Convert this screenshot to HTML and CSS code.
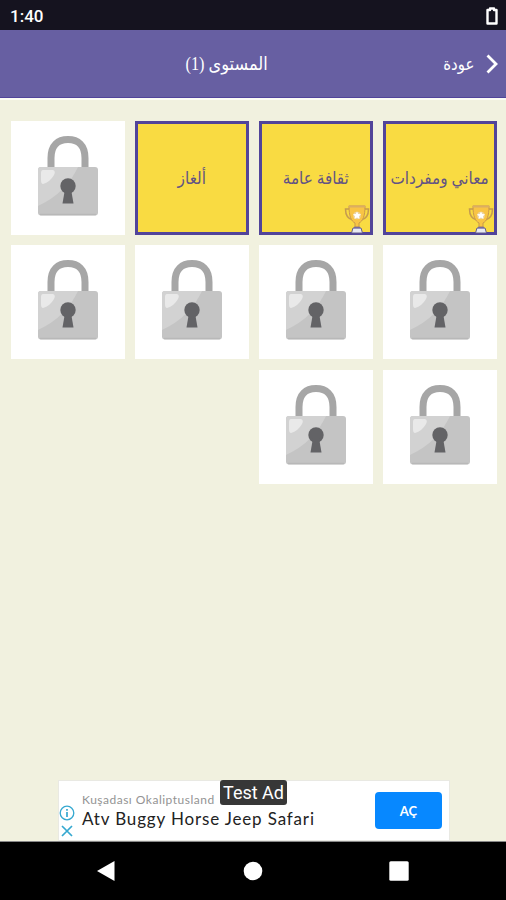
FILE: index.html
```html
<!DOCTYPE html>
<html lang="ar">
<head>
    <meta charset="UTF-8">
    <meta name="viewport" content="width=device-width, initial-scale=1.0">
    <title>المستوى (1)</title>
    <link rel="stylesheet" href="styles.css">
</head>
<body>
    <!-- Shared icons -->
    <svg class="symbols" width="0" height="0">
        <symbol id="lock" viewBox="0 0 60 80">
            <path d="M13 34V22C13 9 20 3.500 30 3.500S47 9 47 22V34" fill="none" stroke="#a6a6a6" stroke-width="7"/>
            <rect x="0" y="31" width="60" height="48.500" rx="3" fill="#c4c4c4"/>
            <path d="M3 31H40C33 46 20 61 0 70V34Q0 31 3 31Z" fill="#d2d2d2"/>
            <path d="M5 34H15Q18 35 16 39Q12 46 5 48Q3 48 3 44V37Q3 34 5 34Z" fill="#e9e9e9"/>
            <path d="M2 78.500H58" stroke="#b8b8b8" stroke-width="1.500"/>
            <circle cx="30" cy="50" r="7.700" fill="#636366"/>
            <path d="M27 53H33L35.500 67.500H24.500Z" fill="#636366"/>
        </symbol>
        <symbol id="trophy" viewBox="0 0 26 30">
            <path d="M6 5H1.500C1.500 12 4 15 9 16M20 5H24.500C24.500 12 22 15 17 16" fill="none" stroke="#c49a50" stroke-width="1.500"/>
            <path d="M5 2H21C21 12 19 17 15 19V23H11V19C7 17 5 12 5 2Z" fill="#f8c445" stroke="#c9994a" stroke-width="1"/>
            <path d="M4.500 2.500H21.500" stroke="#dcae62" stroke-width="2"/>
            <circle cx="13" cy="11.500" r="3.800" fill="#ecd3a0"/>
            <path d="M13 7.500L14.200 10L17 10.300L15 12.200L15.500 15L13 13.600L10.500 15L11 12.200L9 10.300L11.800 10Z" fill="#fff"/>
            <path d="M9 24H17L18.500 29H7.500Z" fill="#e8eaf2" stroke="#61598b" stroke-width="1"/>
            <path d="M10 23.500H16" stroke="#776b9d" stroke-width="1.500"/>
        </symbol>
    </svg>

    <div class="phone">
        <div class="status-bar">
            <span>1:40</span>
            <svg class="battery" viewBox="0 0 12 18">
                <path d="M4 1.500H8V3H10.500V16.500H1.500V3H4Z" fill="none" stroke="#fff" stroke-width="2.400" stroke-linejoin="round"/>
            </svg>
        </div>

        <header class="header">
            <h1 dir="rtl">المستوى (1)</h1>
            <div class="back">
                <span>عودة</span>
                <svg viewBox="0 0 12 20">
                    <path d="M1.500 1.500L10 10L1.500 18.500" fill="none" stroke="#fff" stroke-width="2.800"/>
                </svg>
            </div>
        </header>

        <main class="levels" dir="rtl">
            <div class="tile open">
                <span>معاني ومفردات</span>
                <svg class="trophy"><use href="#trophy"/></svg>
            </div>
            <div class="tile open">
                <span>ثقافة عامة</span>
                <svg class="trophy"><use href="#trophy"/></svg>
            </div>
            <div class="tile open"><span>ألغاز</span></div>
            <div class="tile"><svg class="lock"><use href="#lock"/></svg></div>
            <div class="tile"><svg class="lock"><use href="#lock"/></svg></div>
            <div class="tile"><svg class="lock"><use href="#lock"/></svg></div>
            <div class="tile"><svg class="lock"><use href="#lock"/></svg></div>
            <div class="tile"><svg class="lock"><use href="#lock"/></svg></div>
            <div class="tile"><svg class="lock"><use href="#lock"/></svg></div>
            <div class="tile"><svg class="lock"><use href="#lock"/></svg></div>
        </main>

        <div class="ad" lang="tr">
            <div class="ad-icons">
                <svg viewBox="0 0 16 16">
                    <circle cx="8" cy="8" r="6.800" fill="none" stroke="#35a8d0" stroke-width="1.300"/>
                    <path d="M8 7V12M8 4V5.700" stroke="#35a8d0" stroke-width="1.700"/>
                </svg>
                <svg viewBox="0 0 16 16">
                    <path d="M3 3L13 13M13 3L3 13" stroke="#35a8d0" stroke-width="1.700"/>
                </svg>
            </div>
            <div class="ad-text">
                <p class="ad-brand">Kuşadası Okaliptusland</p>
                <p class="ad-title">Atv Buggy Horse Jeep Safari</p>
            </div>
            <button class="ad-button">AÇ</button>
            <span class="ad-badge">Test Ad</span>
        </div>

        <nav class="nav-bar">
            <svg viewBox="0 0 20 22"><path d="M1 11L18.500 1V21Z" fill="#fff"/></svg>
            <svg viewBox="0 0 20 22"><circle cx="10" cy="11" r="9.300" fill="#fff"/></svg>
            <svg viewBox="0 0 20 22"><rect x=".3" y="1.300" width="19.400" height="19.400" rx="1.500" fill="#fff"/></svg>
        </nav>
    </div>
</body>
</html>
```

FILE: styles.css
```css
:root {
    --purple: #675fa2;
    --purple-dark: #51449a;
    --background: #f1f1df;
    --yellow: #f9db42;
    --ad-blue: #0788ff;
}

* {
    margin: 0;
    padding: 0;
    box-sizing: border-box;
}

body {
    background: var(--background);
}

svg {
    display: block;
}

.symbols {
    position: absolute;
}

.phone {
    display: flex;
    flex-direction: column;
    width: 506px;
    height: 900px;
    overflow: hidden;
    font-family: "Liberation Serif", "DejaVu Sans", serif;
}

.status-bar {
    display: flex;
    justify-content: space-between;
    align-items: center;
    height: 30px;
    padding: 2px 8px 0 10px;
    background: #15131f;
    color: #fff;
    font: 500 17px Roboto, sans-serif;
}

.battery {
    width: 12px;
    height: 18px;
}

.header {
    display: grid;
    grid-template-columns: 1fr auto 1fr;
    align-items: center;
    height: 70px;
    padding: 0 8px 0 0;
    background: var(--purple);
    border-bottom: 2px solid #fcfcf5;
    box-shadow: inset 0 -1px var(--purple-dark);
    color: #fff;
}

.header h1 {
    grid-column: 2;
    margin: 0 22px 0 -22px;
    font-size: 18px;
    font-weight: normal;
    white-space: nowrap;
    transform: scaleX(0.9);
}

.back {
    display: flex;
    justify-content: flex-end;
    align-items: center;
    gap: 12px;
    font-size: 17px;
}

.back span {
    transform: scaleX(0.88);
    transform-origin: right;
}

.back svg {
    width: 12px;
    height: 20px;
}

.levels {
    flex: 1;
    display: grid;
    grid-template-columns: repeat(4, 114px);
    grid-auto-rows: 114px;
    gap: 10.300px 10px;
    align-content: start;
    padding: 21px 9px 0 10px;
}

.tile {
    position: relative;
    display: flex;
    justify-content: center;
    align-items: center;
    background: #fff;
}

.tile.open {
    background: var(--yellow);
    border: 3px solid var(--purple-dark);
    color: #625384;
    font-size: 17px;
    white-space: nowrap;
}

.tile span {
    transform: scaleX(0.9);
}

.lock {
    width: 60px;
    height: 80px;
    margin-top: -4px;
}

.trophy {
    position: absolute;
    right: 0;
    bottom: -2px;
    width: 26px;
    height: 30px;
}

.ad {
    position: relative;
    display: flex;
    align-items: center;
    width: 392px;
    height: 61px;
    margin-left: 58px;
    padding: 0 7px 0 0;
    background: #fff;
    border: 1px solid #e9e9e3;
}

.ad-icons {
    display: grid;
    gap: 2px;
    margin-top: 23px;
}

.ad-icons svg {
    width: 16px;
    height: 16px;
}

.ad-text {
    flex: 1;
    margin-left: 7px;
    padding-top: 1px;
    font-family: Lato, sans-serif;
    white-space: nowrap;
}

.ad-brand {
    color: #939393;
    font-size: 12px;
    line-height: 16px;
    letter-spacing: 0.5px;
}

.ad-title {
    color: #222;
    font-size: 17px;
    line-height: 22px;
    letter-spacing: 0.85px;
}

.ad-button {
    width: 67px;
    height: 37px;
    background: var(--ad-blue);
    border: none;
    border-radius: 4px;
    color: #fff;
    font: bold 13px Lato, sans-serif;
}

.ad-badge {
    position: absolute;
    top: -1px;
    left: 161px;
    width: 67px;
    height: 25px;
    background: #373737;
    border-radius: 3px;
    color: #fff;
    font: 18px/26px Roboto, sans-serif;
    text-align: center;
}

.nav-bar {
    display: flex;
    justify-content: space-between;
    align-items: center;
    height: 59px;
    padding: 0 97px 0 96px;
    background: #000;
    border-top: 1px solid #888;
}

.nav-bar svg {
    width: 20px;
    height: 22px;
}
```
